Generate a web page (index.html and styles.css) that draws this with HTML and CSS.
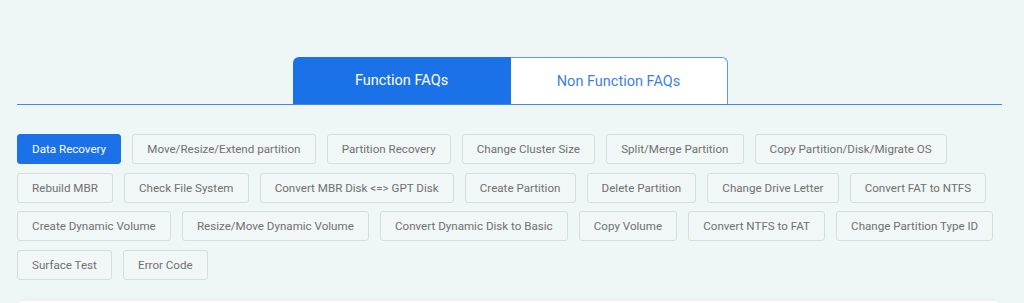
FILE: index.html
```html
<!DOCTYPE html>
<html lang="en">
<head>
  <meta charset="UTF-8">
  <title>FAQs</title>
  <link rel="stylesheet" href="styles.css">
</head>
<body>
  <section class="faq">
    <div class="tabs">
      <a class="tab active" href="#">Function FAQs</a>
      <a class="tab" href="#">Non Function FAQs</a>
    </div>

    <div class="topics">
      <a class="topic active" href="#">Data Recovery</a>
      <a class="topic" href="#">Move/Resize/Extend partition</a>
      <a class="topic" href="#">Partition Recovery</a>
      <a class="topic" href="#">Change Cluster Size</a>
      <a class="topic" href="#">Split/Merge Partition</a>
      <a class="topic" href="#">Copy Partition/Disk/Migrate OS</a>
      <a class="topic" href="#">Rebuild MBR</a>
      <a class="topic" href="#">Check File System</a>
      <a class="topic" href="#">Convert MBR Disk &lt;=&gt; GPT Disk</a>
      <a class="topic" href="#">Create Partition</a>
      <a class="topic" href="#">Delete Partition</a>
      <a class="topic" href="#">Change Drive Letter</a>
      <a class="topic" href="#">Convert FAT to NTFS</a>
      <a class="topic" href="#">Create Dynamic Volume</a>
      <a class="topic" href="#">Resize/Move Dynamic Volume</a>
      <a class="topic" href="#">Convert Dynamic Disk to Basic</a>
      <a class="topic" href="#">Copy Volume</a>
      <a class="topic" href="#">Convert NTFS to FAT</a>
      <a class="topic" href="#">Change Partition Type ID</a>
      <a class="topic" href="#">Surface Test</a>
      <a class="topic" href="#">Error Code</a>
    </div>

    <div class="answers"></div>
  </section>
</body>
</html>
```

FILE: styles.css
```css
* { margin: 0; padding: 0; box-sizing: border-box; }
body {
  font-family: Roboto, 'Liberation Sans', sans-serif;
  background-color: #eef6f6;
  color: #666;
  overflow: hidden;
}
.faq {
  width: 985px;
  margin-left: 17px;
  padding-top: 57px;
}
.tabs {
  display: flex;
  justify-content: center;
  border-bottom: 1px solid #3d87ea;
  padding-left: 1px;
}
.tab {
  width: 217px;
  height: 47px;
  display: flex;
  align-items: center;
  justify-content: center;
  font-size: 14.5px;
  text-decoration: none;
  color: #3d7fe6;
  background: #fff;
  border: 1px solid #5b9af0;
  border-bottom: none;
  border-left: none;
  border-radius: 0 6px 0 0;
}
.tab.active {
  color: #fff;
  background: #1b72e8;
  border: none;
  border-radius: 6px 0 0 0;
  width: 218px;
}
.topics {
  display: flex;
  flex-wrap: wrap;
  gap: 8.5px 11px;
  margin-top: 29px;
}
.topic {
  height: 30px;
  display: flex;
  align-items: center;
  padding: 0 14.1px;
  font-size: 11.6px;
  color: #707070;
  text-decoration: none;
  background: #f1f7f7;
  border: 1px solid #d7dddd;
  border-radius: 3px;
}
.topic.active {
  background: #1b72e8;
  border-color: #1b72e8;
  color: #fff;
}
.answers {
  margin-top: 21px;
  height: 4px;
  margin-left: 3px;
  margin-right: 3px;
  background: #fff;
  border-radius: 8px 8px 0 0;
  box-shadow: 0 -2px 6px rgba(0, 0, 0, 0.04);
}
```
